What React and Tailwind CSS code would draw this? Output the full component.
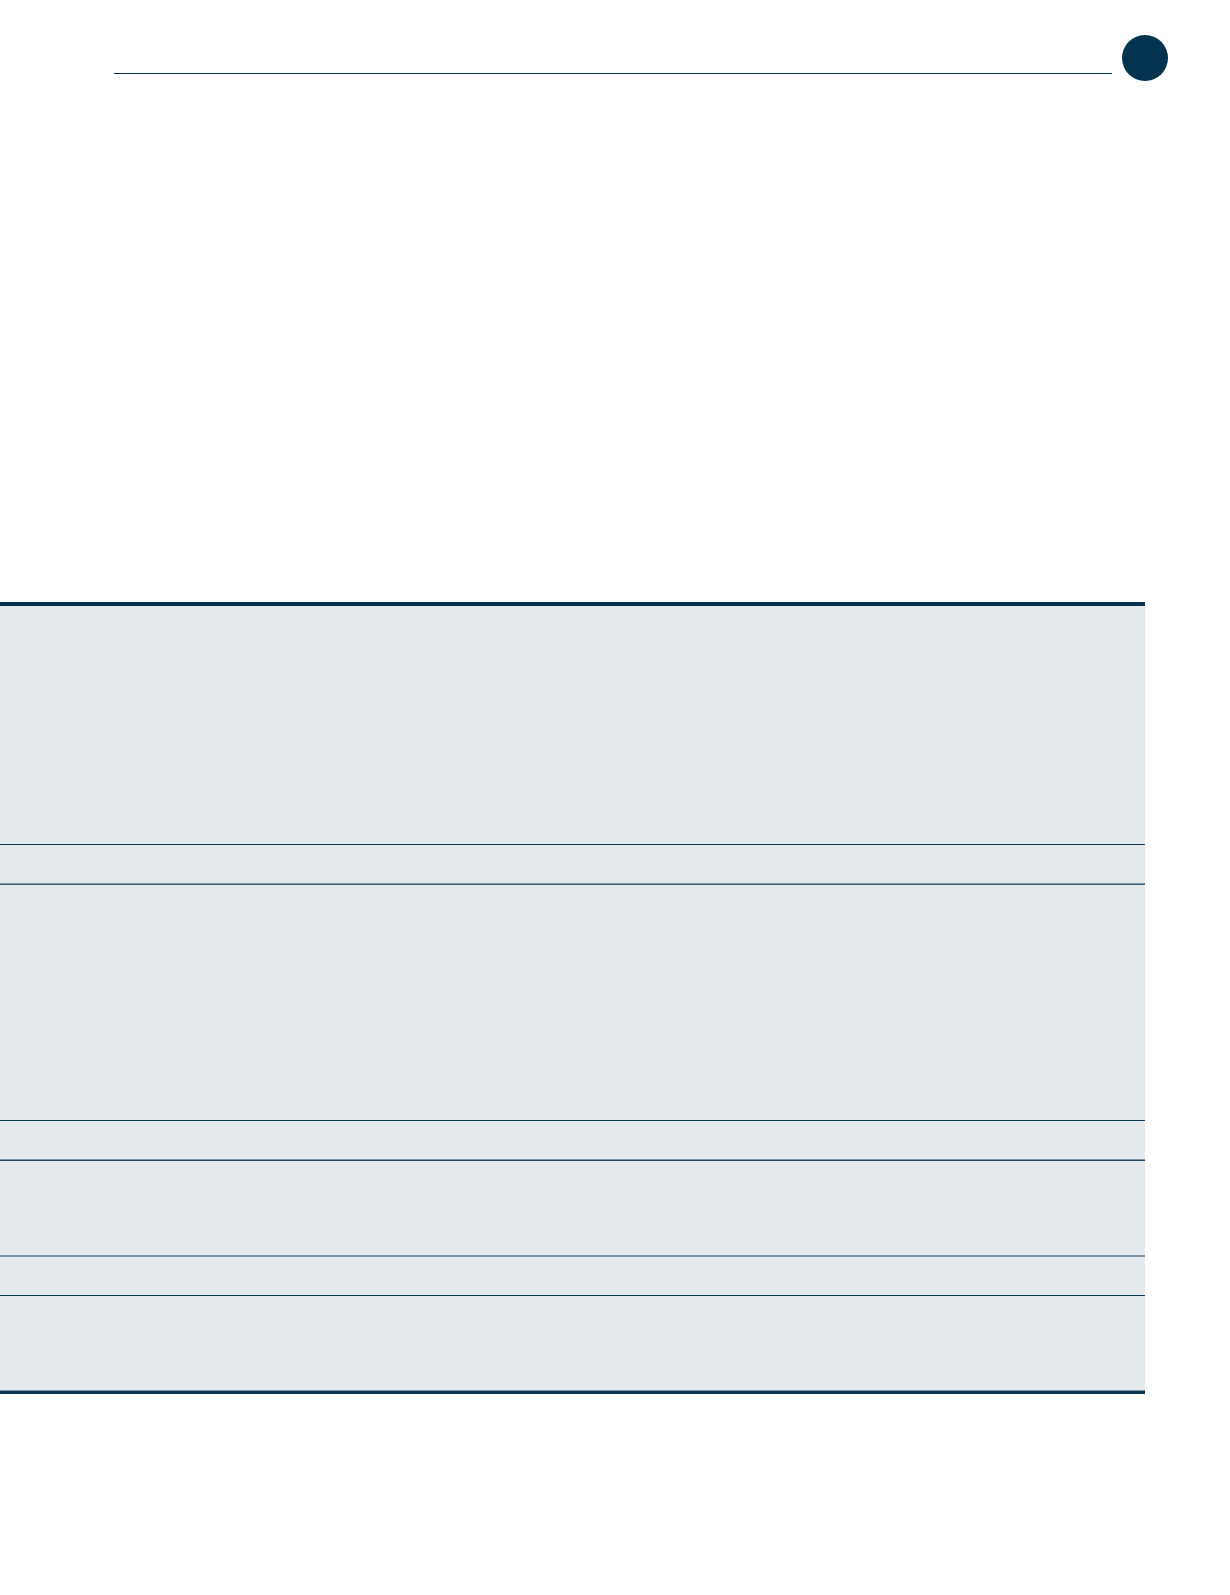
export default function App() {
  return (
    <div className="w-[1230px] h-[1595px] bg-white" style={{ fontFamily: '"Liberation Sans", sans-serif' }}>
      <div className="flex items-start pt-[35px] pl-[114px]">
        <div className="mt-[38px] w-[998px] h-px bg-[#06344f]" />
        <div className="ml-[10px] w-[46px] h-[46px] rounded-full bg-[#04334f]" />
      </div>
      <div className="mt-[521px] w-[1145px] flex flex-col bg-[#e4e9ec]">
        <div className="h-[4px] bg-[#06344f]" />
        <div className="h-[238px]" />
        <div className="h-px bg-[#0b3a55]" />
        <div className="h-[38px]" />
        <div className="h-px bg-[#7d97a9]" />
        <div className="h-px bg-[#3d5f76]" />
        <div className="h-[235px]" />
        <div className="h-px bg-[#0b3a55]" />
        <div className="h-[38px]" />
        <div className="h-px bg-[#7d97a9]" />
        <div className="h-px bg-[#1f4863]" />
        <div className="h-[94px]" />
        <div className="h-[2px] bg-[#7d97a9]" />
        <div className="h-[38px]" />
        <div className="h-px bg-[#0b3a55]" />
        <div className="h-[94px]" />
        <div className="h-px bg-[#7d97a9]" />
        <div className="h-[3px] bg-[#06344f]" />
      </div>
    </div>
  );
}
